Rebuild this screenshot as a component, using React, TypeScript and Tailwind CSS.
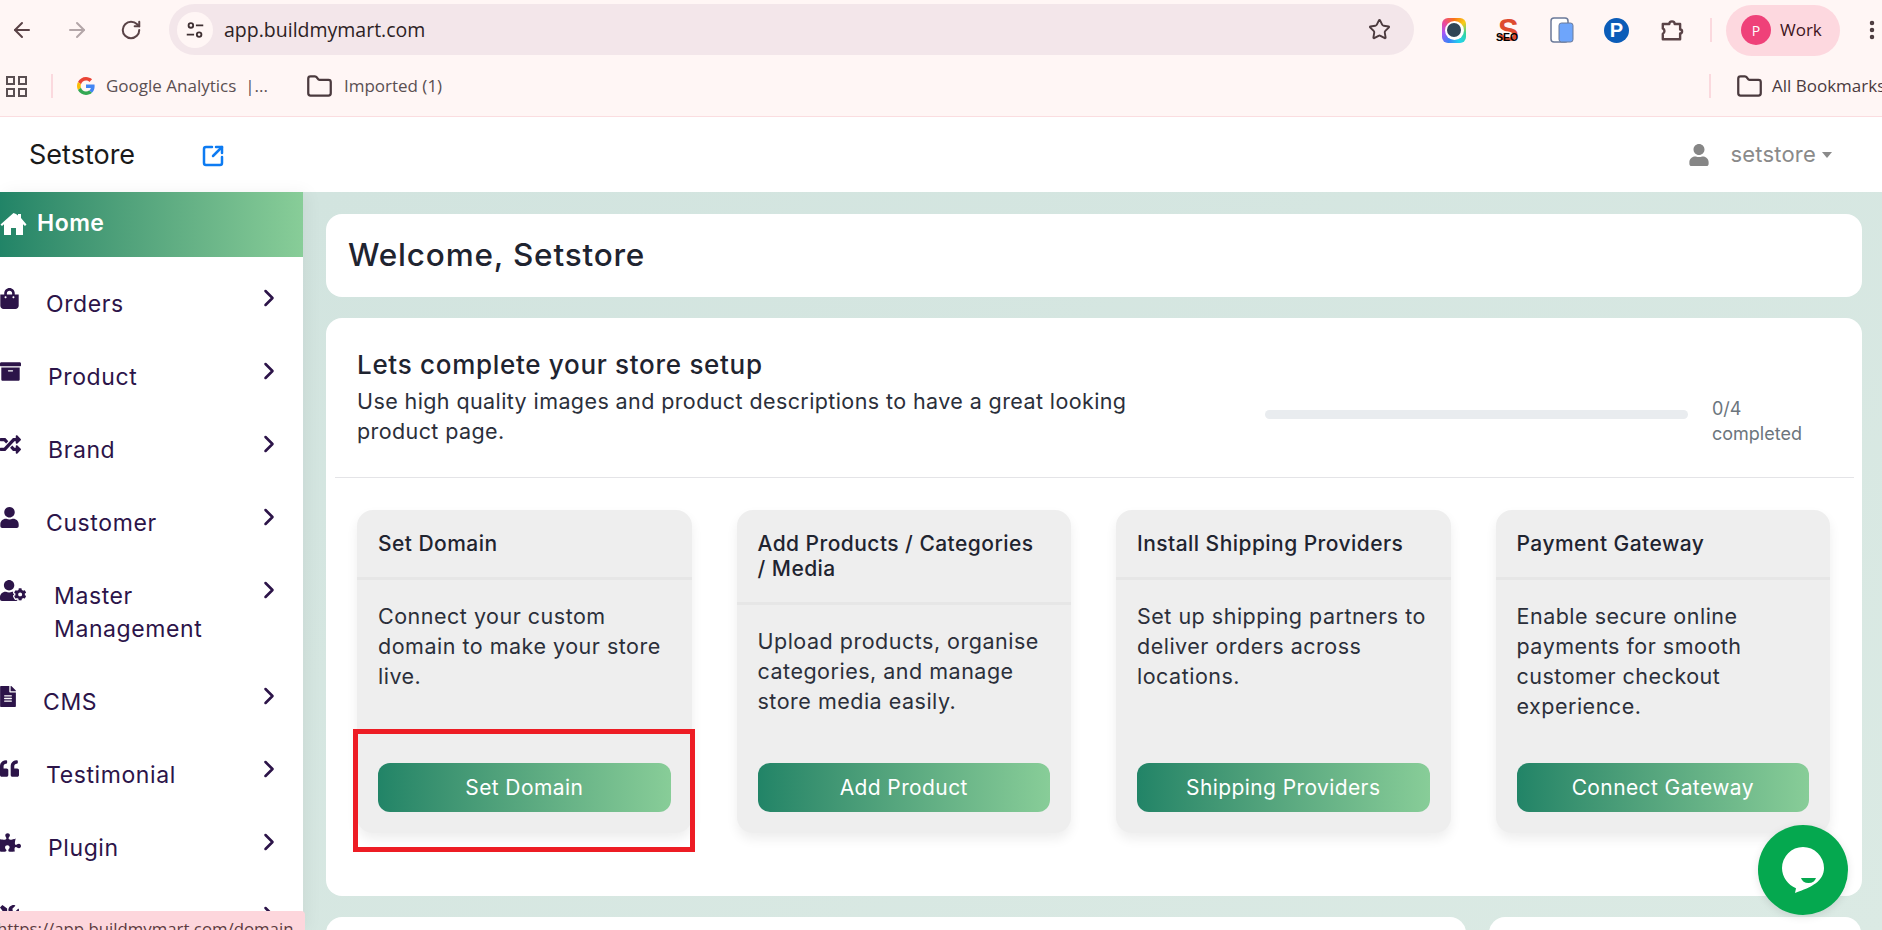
import { ArrowLeft, ArrowRight, RotateCw, Star, Folder, EllipsisVertical, ChevronRight, SquareArrowOutUpRight } from 'lucide-react';
import { FaShoppingBag, FaArchive, FaRandom, FaUser, FaUserCog, FaFileAlt, FaQuoteLeft, FaPuzzlePiece, FaTools } from 'react-icons/fa';
import type { ComponentType, ReactNode } from 'react';

const menu: { label: ReactNode; icon: ComponentType<{ className?: string }>; size: string; pad: string; h: string }[] = [
  { label: 'Orders', icon: FaShoppingBag, size: 'w-[19px] h-[21px]', pad: 'pl-[46px]', h: 'h-[73px]' },
  { label: 'Product', icon: FaArchive, size: 'w-[21px] h-[21px]', pad: 'pl-[48px]', h: 'h-[73px]' },
  { label: 'Brand', icon: FaRandom, size: 'w-[21px] h-[21px]', pad: 'pl-[48px]', h: 'h-[73px]' },
  { label: 'Customer', icon: FaUser, size: 'w-[19px] h-[21px]', pad: 'pl-[46px]', h: 'h-[73px]' },
  { label: <>Master<br />Management</>, icon: FaUserCog, size: 'w-[26px] h-[21px]', pad: 'pl-[54px]', h: 'h-[106px]' },
  { label: 'CMS', icon: FaFileAlt, size: 'w-[16px] h-[21px]', pad: 'pl-[43px]', h: 'h-[73px]' },
  { label: 'Testimonial', icon: FaQuoteLeft, size: 'w-[19px] h-[19px]', pad: 'pl-[46px]', h: 'h-[73px]' },
  { label: 'Plugin', icon: FaPuzzlePiece, size: 'w-[21px] h-[21px]', pad: 'pl-[48px]', h: 'h-[73px]' },
  { label: 'Custom Script', icon: FaTools, size: 'w-[19px] h-[19px]', pad: 'pl-[46px]', h: 'h-[73px]' },
];

const steps = [
  { title: 'Set Domain', text: 'Connect your custom domain to make your store live.', button: 'Set Domain' },
  { title: 'Add Products / Categories / Media', text: 'Upload products, organise categories, and manage store media easily.', button: 'Add Product' },
  { title: 'Install Shipping Providers', text: 'Set up shipping partners to deliver orders across locations.', button: 'Shipping Providers' },
  { title: 'Payment Gateway', text: 'Enable secure online payments for smooth customer checkout experience.', button: 'Connect Gateway' },
];

function GoogleG() {
  return (
    <svg viewBox="0 0 48 48" className="h-[18px] w-[18px]">
      <path fill="#EA4335" d="M24 9.500c3.500 0 6.700 1.200 9.200 3.600l6.900-6.900C35.900 2.400 30.500 0 24 0 14.600 0 6.500 5.400 2.600 13.200l8 6.200C12.500 13.700 17.800 9.500 24 9.500z" />
      <path fill="#4285F4" d="M46.980 24.550c0-1.570-.15-3.090-.38-4.550H24v9.020h12.940c-.58 2.960-2.260 5.480-4.780 7.180l7.730 6c4.510-4.180 7.090-10.360 7.090-17.650z" />
      <path fill="#FBBC05" d="M10.530 28.590c-.48-1.450-.76-2.990-.76-4.590s.27-3.140.76-4.590l-7.980-6.190C.92 16.460 0 20.120 0 24c0 3.880.92 7.540 2.560 10.780l7.970-6.190z" />
      <path fill="#34A853" d="M24 48c6.480 0 11.930-2.130 15.890-5.810l-7.730-6c-2.150 1.450-4.920 2.300-8.160 2.300-6.260 0-11.570-4.220-13.470-9.910l-7.980 6.190C6.510 42.620 14.620 48 24 48z" />
    </svg>
  );
}

function BrowserBar() {
  return (
    <div className="h-[117px] shrink-0 border-b border-[#fbdde0] bg-[#fff6f5] font-['Open_Sans',sans-serif] text-[#4b3a3e]">
      <div className="flex h-[60px] items-center">
        <div className="flex w-[169px] shrink-0 items-center gap-[31px] pl-[10px]">
          <ArrowLeft className="h-[24px] w-[24px] text-[#5a4347]" strokeWidth={2} />
          <ArrowRight className="h-[24px] w-[24px] text-[#b3a6a8]" strokeWidth={2} />
          <RotateCw className="h-[22px] w-[22px] text-[#5a4347]" strokeWidth={2.200} />
        </div>
        <div className="mt-[-1px] flex h-[51px] w-[1245px] shrink-0 items-center rounded-full bg-[#f3e6ea] pl-[8px] pr-[23px]">
          <div className="flex h-[36px] w-[36px] items-center justify-center rounded-full bg-[#fff6f5]">
            <svg viewBox="0 0 24 24" className="h-[22px] w-[22px]" fill="none" stroke="#3f3033" strokeWidth="2">
              <circle cx="7.500" cy="7" r="2.500" />
              <path d="M13 7h8M3 17h8" />
              <circle cx="16.500" cy="17" r="2.500" />
            </svg>
          </div>
          <span className="ml-[11px] text-[19.500px] text-[#2d2224]">app.buildmymart.com</span>
          <Star className="ml-auto h-[23px] w-[23px] text-[#4b3a3e]" strokeWidth={2} />
        </div>
        <div className="ml-[28px] flex w-[243px] shrink-0 items-center justify-between">
          <div className="flex h-[25px] w-[24px] items-center justify-center rounded-[6px] bg-[conic-gradient(#f97316,#facc15,#34d399,#22d3ee,#3b82f6,#a855f7,#ec4899,#f97316)]">
            <div className="flex h-[19px] w-[19px] items-center justify-center rounded-full bg-white">
              <div className="h-[14px] w-[14px] rounded-full bg-[#2f4556]" />
            </div>
          </div>
          <div className="relative h-[26px] w-[24px] font-['Liberation_Sans',sans-serif] font-bold leading-none">
            <span className="absolute left-[2px] top-[-2px] text-[31px] text-[#de4b30]">S</span>
            <span className="absolute left-0 top-[15px] text-[10.500px] text-black">SEO</span>
          </div>
          <svg viewBox="0 0 24 26" className="h-[26px] w-[24px]">
            <rect x="1" y="1" width="17" height="24" rx="3" fill="#fff" stroke="#6b7a99" strokeWidth="1.500" />
            <rect x="9" y="6" width="14" height="19" rx="2.500" fill="#6ea5fb" stroke="#6b7a99" strokeWidth="1" />
          </svg>
          <div className="flex h-[25px] w-[25px] items-center justify-center rounded-full bg-[#0b5cb8] font-['Liberation_Sans',sans-serif] text-[20px] font-bold leading-none text-white">
            P
          </div>
          <svg viewBox="0 0 24 24" className="h-[26px] w-[26px]" fill="none" stroke="#5a4347" strokeWidth="2.200" strokeLinejoin="round">
            <path d="M3.500 6.500h6a2.500 2.500 0 0 1 5 0h5v5a1.800 1.800 0 0 1 0 3.600v5.400h-16v-5a2.800 2.800 0 0 0 0-5z" />
          </svg>
        </div>
        <div className="ml-[25px] h-[24px] w-[2px] shrink-0 bg-[#fbd9de]" />
        <div className="ml-[14px] flex h-[51px] w-[114px] shrink-0 items-center rounded-full bg-[#fdd8df] pl-[15px]">
          <div className="flex h-[30px] w-[30px] items-center justify-center rounded-full bg-[#ef4179] text-[14px] text-white">P</div>
          <span className="ml-[9px] text-[17px] text-[#3d1420]">Work</span>
        </div>
        <EllipsisVertical className="ml-[20px] h-[24px] w-[24px] shrink-0 text-[#4b3a3e]" strokeWidth={2.500} />
      </div>
      <div className="mt-[-2px] flex h-[56px] items-center whitespace-nowrap text-[17px]">
        <div className="ml-[6px] grid h-[21px] w-[21px] grid-cols-2 gap-[3px]">
          <div className="border-2 border-[#5a4f52]" />
          <div className="border-2 border-[#5a4f52]" />
          <div className="border-2 border-[#5a4f52]" />
          <div className="border-2 border-[#5a4f52]" />
        </div>
        <div className="ml-[24px] h-[24px] w-[2px] bg-[#fbd9de]" />
        <div className="ml-[24px]"><GoogleG /></div>
        <span className="ml-[11px] text-[#5a4f52]">Google Analytics &nbsp;|...</span>
        <Folder className="ml-[38px] h-[27px] w-[27px] text-[#4b3a3e]" strokeWidth={2} />
        <span className="ml-[11px] text-[#5a4f52]">Imported (1)</span>
        <div className="ml-auto flex w-[173px] shrink-0 items-center overflow-hidden">
          <div className="h-[24px] w-[2px] shrink-0 bg-[#fbd9de]" />
          <Folder className="ml-[25px] h-[27px] w-[27px] shrink-0 text-[#4b3a3e]" strokeWidth={2} />
          <span className="ml-[9px] text-[#4b3a3e]">All Bookmarks</span>
        </div>
      </div>
    </div>
  );
}

function Sidebar() {
  return (
    <aside className="relative flex w-[303px] shrink-0 flex-col overflow-hidden bg-white shadow-[4px_0_16px_rgba(0,0,0,0.05)]">
      <a className="flex h-[65px] shrink-0 items-center bg-gradient-to-r from-[#218467] to-[#88cd98] pb-[2px] font-semibold text-white">
        <svg viewBox="0 0 27 24" className="h-[24px] w-[27px]" fill="#fff">
          <path d="M13.500 1 0.500 12.500l1.500 1.500 2-1.700V23h7v-7h5v7h7V12.300l2 1.700 1.500-1.500L21 6V2h-3v1.500L16 2z" />
        </svg>
        <span className="ml-[10px] text-[23px] tracking-[0.5px]">Home</span>
      </a>
      <div className="pt-[10px]">
        {menu.map((m, i) => (
          <div key={i} className={`relative text-[#2c1449] ${m.h}`}>
            <m.icon className={`absolute left-0 top-[21px] ${m.size}`} />
            <div className={`${m.pad} whitespace-nowrap pt-[21px] text-[23px] leading-[33px] tracking-[0.6px]`}>{m.label}</div>
            <ChevronRight className="absolute left-[255px] top-[17px] h-[28px] w-[28px]" strokeWidth={2.200} />
          </div>
        ))}
      </div>
    </aside>
  );
}

function StepCard({ title, text, button }: { title: string; text: string; button: string }) {
  return (
    <div className="flex h-[323px] flex-col rounded-[16px] bg-[#eeeeee] shadow-[0_6px_12px_rgba(0,0,0,0.07)]">
      <div className="border-b-[3px] border-[#e6e6e6] py-[21px] pl-[21px] pr-[30px] text-[21px] font-medium leading-[25px] tracking-[0.45px] text-[#1f2430]">{title}</div>
      <p className="px-[21px] pt-[21px] text-[21.500px] leading-[30px] tracking-[0.5px] text-[#2b2f3a]">{text}</p>
      <button className="mx-[21px] mb-[21px] mt-auto h-[49px] shrink-0 rounded-[12px] bg-gradient-to-r from-[#218467] to-[#88cd98] text-[21px] tracking-[0.4px] text-white">
        {button}
      </button>
    </div>
  );
}

export default function App() {
  return (
    <div className="flex h-[930px] w-[1882px] flex-col overflow-hidden bg-white font-['Inter','Noto_Sans',sans-serif]">
      <BrowserBar />
      <header className="flex h-[75px] shrink-0 items-center bg-white pt-[2px]">
        <span className="ml-[29px] w-[94px] whitespace-nowrap text-[27px] text-[#1a1a1a]">Setstore</span>
        <SquareArrowOutUpRight className="ml-[78px] h-[24px] w-[24px] text-[#0d7bf2]" strokeWidth={2.500} />
        <FaUser className="ml-auto mt-[-2px] h-[22px] w-[22px] text-[#868686]" />
        <span className="ml-[20px] mt-[-2px] text-[22px] tracking-[0.2px] text-[#8a8a8a]">setstore</span>
        <span className="ml-[6px] mr-[50px] mt-[-2px] h-0 w-0 border-x-[5px] border-t-[6px] border-x-transparent border-t-[#8a8a8a]" />
      </header>
      <div className="relative flex min-h-0 flex-1">
        <Sidebar />
        <main className="min-w-0 flex-1 bg-gradient-to-br from-[#d2e4df] to-[#dbeae4] pl-[23px] pr-[20px] pt-[22px]">
          <div className="flex h-[83px] items-center rounded-[16px] bg-white pb-[2px] pl-[22px] text-[31.500px] font-medium tracking-[0.8px] text-[#1f2430]">Welcome, Setstore</div>
          <section className="relative mt-[21px] h-[578px] rounded-[16px] bg-white pl-[9px] pr-[8px]">
            <div className="flex h-[160px] border-b border-[#e4e4e7] pl-[22px]">
              <div className="w-[800px] shrink-0 pt-[30px]">
                <h2 className="text-[26px] font-medium leading-[34px] tracking-[0.7px] text-[#1f2430]">Lets complete your store setup</h2>
                <p className="mt-[4px] text-[21.500px] leading-[30px] tracking-[0.4px] text-[#2b2f3a]">Use high quality images and product descriptions to have a great looking product page.</p>
              </div>
              <div className="ml-[108px] mt-[92px] h-[9px] w-[423px] shrink-0 rounded-full bg-[#e9ecef]" />
              <div className="ml-[24px] pt-[78px] text-[18px] leading-[25px] text-[#6c757d]">0/4<br />completed</div>
            </div>
            <div className="grid grid-cols-4 gap-x-[45px] pl-[22px] pr-[24px] pt-[32px]">
              {steps.map((s) => (
                <StepCard key={s.title} {...s} />
              ))}
            </div>
            <div className="absolute left-[27px] top-[411px] h-[123px] w-[342px] border-[5px] border-[#ed1c24]" />
          </section>
          <div className="mt-[21px] flex gap-[23px]">
            <div className="h-[40px] w-[1140px] rounded-[16px] bg-white" />
            <div className="h-[40px] w-[372px] rounded-[16px] bg-white" />
          </div>
        </main>
        <div className="absolute bottom-0 left-0 h-[19px] w-[305px] overflow-hidden whitespace-nowrap rounded-tr-[4px] bg-[#fdd6dc] pt-[7px] font-['Open_Sans',sans-serif] text-[16.800px] leading-[22px] text-[#5c3a40]">
          <span className="ml-[-3px] block">https://app.buildmymart.com/domain</span>
        </div>
        <div className="absolute bottom-[15px] right-[34px] flex h-[90px] w-[90px] items-center justify-center rounded-full bg-[#05a84f] shadow-[0_2px_8px_rgba(0,0,0,0.1)]">
          <svg viewBox="0 0 42 46" className="h-[46px] w-[42px]">
            <path d="M21 0a21 21 0 0 1 21 21c0 13-12 19-29 25l1-4.800C6 38 0 30 0 21A21 21 0 0 1 21 0z" fill="#fff" />
            <path d="M19 31h15c-1 3-3.500 5-7.500 5s-6.500-2-7.500-5z" fill="#05a84f" />
          </svg>
        </div>
      </div>
    </div>
  );
}
